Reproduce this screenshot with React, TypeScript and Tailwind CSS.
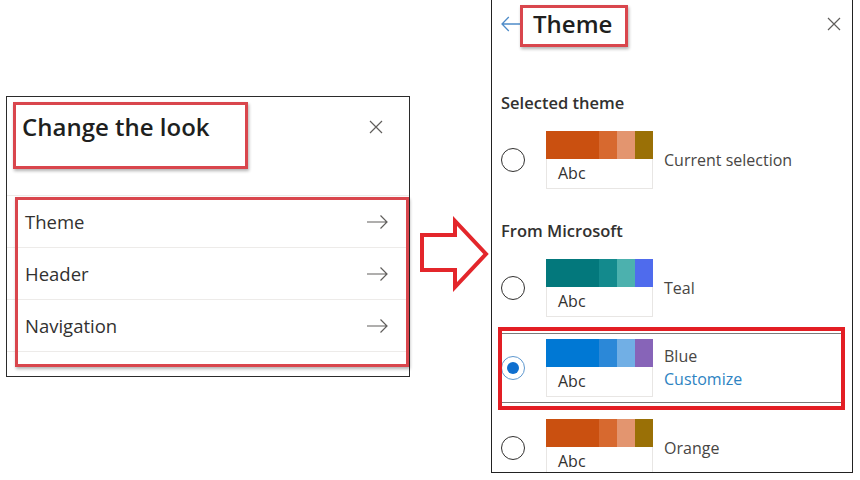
import React from 'react';

type Theme = {
  name: string;
  colors: [string, string, string, string];
  selected?: boolean;
  customize?: boolean;
};

const current: Theme = {
  name: 'Current selection',
  colors: ['#ca5010', '#d7692f', '#e3956f', '#9a7006'],
};

const themes: Theme[] = [
  { name: 'Teal', colors: ['#03787c', '#138a8d', '#4cb1ae', '#4f6bed'] },
  { name: 'Blue', colors: ['#0078d4', '#2b88d8', '#71afe5', '#8764b8'], selected: true, customize: true },
  { name: 'Orange', colors: ['#ca5010', '#d7692f', '#e3956f', '#9a7006'] },
];

function CloseIcon({ className }: { className?: string }) {
  return (
    <svg className={className} width="14" height="14" viewBox="0 0 14 14" fill="none" stroke="currentColor" strokeWidth="1.2">
      <path d="M1 1l12 12M13 1L1 13" />
    </svg>
  );
}

function ArrowRightIcon() {
  return (
    <svg width="21" height="14" viewBox="0 0 21 14" fill="none" stroke="currentColor" strokeWidth="1.2">
      <path d="M0 7h20M13.5 0.5L20 7l-6.5 6.5" />
    </svg>
  );
}

function BackIcon() {
  return (
    <svg width="20" height="16" viewBox="0 0 20 16" fill="none" stroke="currentColor" strokeWidth="1.3">
      <path d="M20 8H1.2M7.8 1L1 8l6.8 7" />
    </svg>
  );
}

function Radio({ checked }: { checked?: boolean }) {
  if (checked) {
    return (
      <div className="flex h-[24px] w-[24px] shrink-0 items-center justify-center rounded-full border border-[#5e98cf]">
        <div className="h-[12px] w-[12px] rounded-full bg-[#0f6fcf]" />
      </div>
    );
  }
  return <div className="h-[24px] w-[24px] shrink-0 rounded-full border border-[#323130]" />;
}

function Swatch({ colors }: { colors: Theme['colors'] }) {
  return (
    <div className="w-[107px] shrink-0">
      <div className="flex h-[28px]">
        <div className="w-[53px]" style={{ background: colors[0] }} />
        <div className="w-[18px]" style={{ background: colors[1] }} />
        <div className="w-[18px]" style={{ background: colors[2] }} />
        <div className="w-[18px]" style={{ background: colors[3] }} />
      </div>
      <div className="h-[30px] border-x border-b border-[#e8e6e4] pl-[11px] text-[16px] leading-[29px] text-[#323130]">Abc</div>
    </div>
  );
}

function ThemeRow({ theme }: { theme: Theme }) {
  return (
    <div
      className={
        theme.selected
          ? 'flex h-[70px] items-center border-y border-[#7a7a7a]'
          : 'flex h-[70px] items-center'
      }
    >
      <Radio checked={theme.selected} />
      <div className="ml-[21px]">
        <Swatch colors={theme.colors} />
      </div>
      <div className="ml-[11px] text-[16px] leading-[23px] text-[#484644]">
        <div>{theme.name}</div>
        {theme.customize && <div className="text-[#2e83c2]">Customize</div>}
      </div>
    </div>
  );
}

export default function App() {
  return (
    <div className="flex h-[480px] w-[860px] items-start overflow-hidden bg-white font-['Open_Sans','Noto_Sans',Arial,sans-serif]">
      {/* Change the look panel */}
      <div className="relative ml-[6px] mt-[96px] h-[281px] w-[404px] shrink-0 border border-[#2b2b2b] bg-white">
        <div className="flex h-[98px] items-start justify-between pl-[15px] pr-[26px] pt-[14px]">
          <h1 className="text-[24px] font-semibold leading-[32px] text-[#201f1e]">Change the look</h1>
          <CloseIcon className="mt-[9px] text-[#605e5c]" />
        </div>
        <div className="border-t border-[#edebe9]">
          {['Theme', 'Header', 'Navigation'].map((label) => (
            <div
              key={label}
              className="flex h-[52px] items-center justify-between border-b border-[#edebe9] pl-[18px] pr-[21px] text-[18.5px] text-[#323130]"
            >
              <span>{label}</span>
              <span className="text-[#605e5c]">
                <ArrowRightIcon />
              </span>
            </div>
          ))}
        </div>
        <div className="pointer-events-none absolute left-[6px] top-[5px] h-[67px] w-[235px] border-[3px] border-[#d9464d] shadow-[1px_2px_3px_rgba(0,0,0,0.3)]" />
        <div className="pointer-events-none absolute left-[8px] top-[100px] h-[170px] w-[394px] border-[3px] border-[#d9464d] shadow-[1px_2px_3px_rgba(0,0,0,0.3)]" />
      </div>

      {/* block arrow */}
      <svg className="ml-[9px] mt-[216px] shrink-0" width="72" height="76" viewBox="0 0 72 76" fill="#fff" stroke="#e3262b" strokeWidth="4">
        <polygon points="3,19 36,19 36,5 67,38 36,71 36,54 3,54" />
      </svg>

      {/* Theme panel */}
      <div className="relative h-[473px] w-[362px] shrink-0 overflow-hidden border-x border-b border-[#222]">
        <div className="flex h-[48px] items-center pl-[9px] pr-[11px]">
          <span className="text-[#4f8cc9]">
            <BackIcon />
          </span>
          <h2 className="ml-[12px] text-[24px] font-semibold leading-[32px] text-[#201f1e]">Theme</h2>
          <CloseIcon className="ml-auto text-[#605e5c]" />
        </div>
        <div className="pl-[9px] pr-[10px]">
          <div className="mt-[43px] text-[16.5px] font-semibold leading-[24px] text-[#323130]">Selected theme</div>
          <div className="mt-[10px]">
            <ThemeRow theme={current} />
          </div>
          <div className="mt-[24px] text-[16.5px] font-semibold leading-[24px] text-[#323130]">From Microsoft</div>
          <div className="mt-[10px] flex flex-col gap-[10px]">
            {themes.map((t) => (
              <ThemeRow key={t.name} theme={t} />
            ))}
          </div>
        </div>
        <div className="pointer-events-none absolute left-[28px] top-[5px] h-[42px] w-[108px] border-[3px] border-[#d9464d] shadow-[1px_2px_3px_rgba(0,0,0,0.3)]" />
        <div className="pointer-events-none absolute left-[6px] top-[327px] h-[83px] w-[347px] border-[4px] border-[#e31e24]" />
      </div>
    </div>
  );
}
